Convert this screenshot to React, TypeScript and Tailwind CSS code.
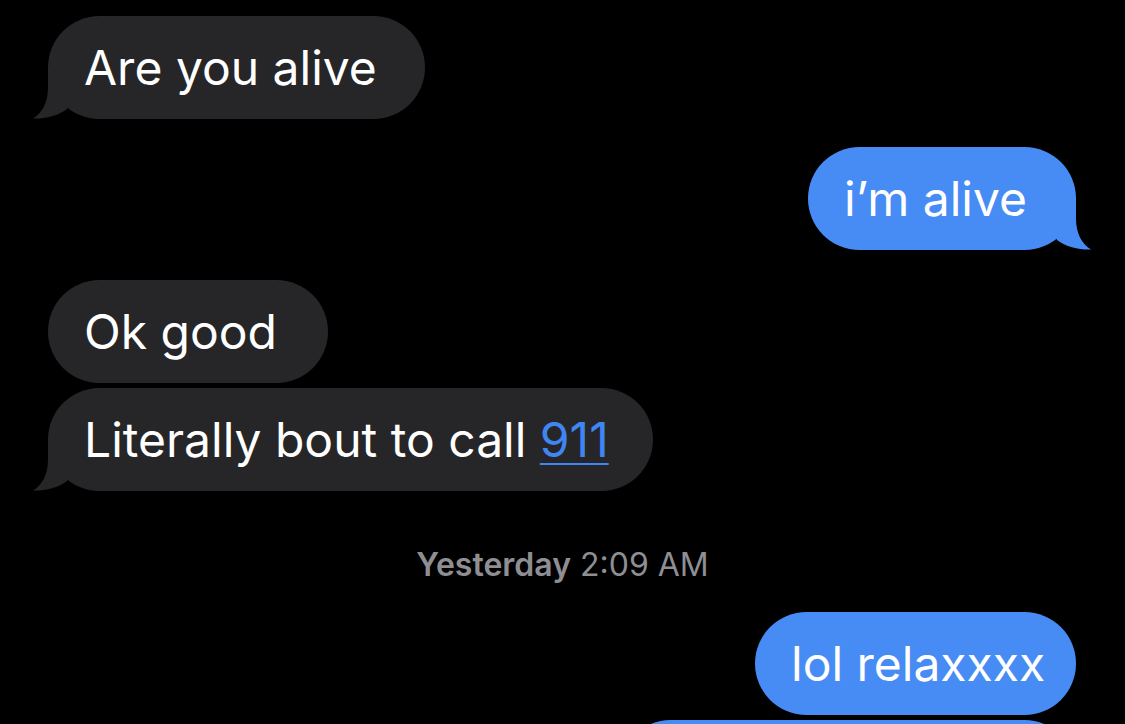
import React from "react"

type Side = "left" | "right"

function Tail({ side, color }: { side: Side; color: string }) {
    return (
        <svg
            className={side === "left" ? "absolute -left-4 bottom-0" : "absolute -right-4 bottom-0 -scale-x-100"}
            width="50"
            height="52"
            viewBox="0 0 50 52"
        >
            <path d="M16 0 L16 20 C16 36 10 46 1 51.5 C12 52 26 49 35 42 L50 0 Z" fill={color} />
        </svg>
    )
}

function Bubble({ side, tail, width, children }: { side: Side; tail?: boolean; width: string; children: React.ReactNode }) {
    const color = side === "left" ? "#262628" : "#478cf4"
    return (
        <div className={side === "left" ? "flex justify-start pl-[48px]" : "flex justify-end pr-[49px]"}>
            <div
                className={
                    "relative flex h-[103px] items-center whitespace-nowrap rounded-[52px] pl-[36px] text-[48px] leading-none text-white " +
                    width +
                    (side === "left" ? " bg-[#262628]" : " bg-[#478cf4]")
                }
            >
                {tail && <Tail side={side} color={color} />}
                <span className="relative">{children}</span>
            </div>
        </div>
    )
}

export default function App() {
    return (
        <div className="h-[724px] w-[1125px] overflow-hidden bg-black font-['Inter','Liberation_Sans',sans-serif]">
            <div className="flex flex-col pt-[16px]">
                <Bubble side="left" tail width="w-[377px]">Are you alive</Bubble>
                <div className="mt-[28px]">
                    <Bubble side="right" tail width="w-[268px]">i’m alive</Bubble>
                </div>
                <div className="mt-[30px]">
                    <Bubble side="left" width="w-[280px]">Ok good</Bubble>
                </div>
                <div className="mt-[5px]">
                    <Bubble side="left" tail width="w-[605px]">
                        Literally bout to call{" "}
                        <span className="text-[#3f86f2] underline decoration-2 underline-offset-[6px]">911</span>
                    </Bubble>
                </div>
                <div className="mt-[54px] flex h-[40px] items-center justify-center text-[32px] text-[#8e8e93]">
                    <span className="font-semibold">Yesterday</span>
                    <span className="ml-[9px]">2:09 AM</span>
                </div>
                <div className="mt-[27px]">
                    <Bubble side="right" width="w-[321px]">lol relaxxxx</Bubble>
                </div>
                <div className="mt-[5px] flex justify-end pr-[49px]">
                    <div className="h-[103px] w-[457px] rounded-[52px] bg-[#478cf4]"></div>
                </div>
            </div>
        </div>
    )
}
